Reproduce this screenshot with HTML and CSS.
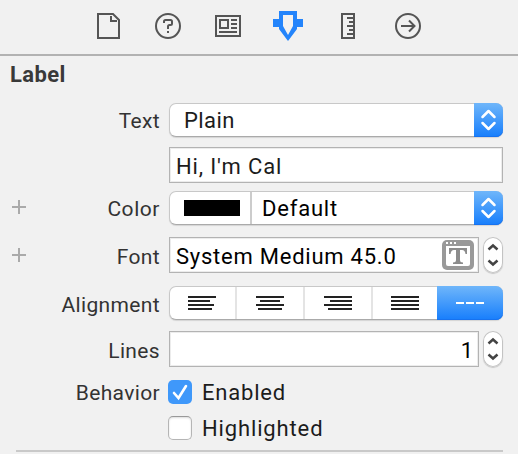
FILE: index.html
```html
<!DOCTYPE html>
<html lang="en">
<head>
<meta charset="utf-8">
<title>Attributes Inspector</title>
<link rel="stylesheet" href="styles.css">
</head>
<body>
<nav class="tabs">
  <svg class="tab" viewBox="0 0 30 30"><path d="M5 3H20L26 9V27H5Z"/><path d="M18 5V10H24"/></svg>
  <svg class="tab" viewBox="0 0 30 30"><circle cx="15" cy="15" r="12"/><path d="M11 12V10.5Q11 9 12.5 9H17.5Q19 9 19 10.5V12.5Q19 14 17.5 14H16.500Q15 14 15 15.500V18M15 20V22"/></svg>
  <svg class="tab" viewBox="0 0 30 30"><path d="M3 5H27V25H3ZM7 9H15V17H7ZM18 9H24M18 13H24M18 17H24M6 21H24"/></svg>
  <svg class="tab selected" viewBox="0 0 30 30"><path class="solid" fill-rule="evenodd" d="M6 0H24V8H30V16H24V18L15 30L6 18V16H0V8H6ZM10 4V15L15 24L20 15V4Z"/></svg>
  <svg class="tab" viewBox="0 0 30 30"><path d="M9 3H21V27H9ZM14 7H20M16 11H20M14 15H20M16 19H20M14 23H20"/></svg>
  <svg class="tab" viewBox="0 0 30 30"><circle cx="15" cy="15" r="12"/><path d="M8 15H21M16 9.500L21.500 15L16 20.500"/></svg>
</nav>
<main class="inspector">
  <h1 class="title">Label</h1>

  <div class="row r-text">
    <span></span><label class="name">Text</label>
    <div class="popup"><span class="value plain">Plain</span><span class="arrows"><svg viewBox="0 0 29 34"><path d="M8.500 14L14.500 8L20.500 14M8.500 20L14.500 26L20.500 20"/></svg></span></div>
  </div>
  <div class="row r-content">
    <span></span><span></span>
    <div class="field"><span class="hi">Hi, I'm Cal</span></div>
  </div>
  <div class="row r-color">
    <svg class="plus" viewBox="0 0 14 14"><path d="M0 7H14M7 0V14"/></svg><label class="name">Color</label>
    <div class="popup"><span class="well"><i class="swatch"></i></span><span class="value default">Default</span><span class="arrows"><svg viewBox="0 0 29 34"><path d="M8.500 14L14.500 8L20.500 14M8.500 20L14.500 26L20.500 20"/></svg></span></div>
  </div>
  <div class="row r-font">
    <svg class="plus" viewBox="0 0 14 14"><path d="M0 7H14M7 0V14"/></svg><label class="name">Font</label>
    <div class="pair">
      <div class="field"><span class="system">System Medium 45.0</span>
        <svg class="fonticon" viewBox="0 0 32 30"><rect width="32" height="30" rx="5" fill="#999"/><path d="M4 6H28V24Q28 26 26 26H6Q4 26 4 24Z" fill="#fff"/><path d="M4 2H6V4H4ZM8 2H10V4H8ZM12 2H14V4H12Z" fill="#fff"/><path d="M7 8H25V14H23.500Q23 10 20 10H18V20Q18 22.500 21 22.500V24H11V22.500Q14 22.500 14 20V10H12Q9 10 8.500 14H7Z" fill="#8c8c8c"/></svg>
      </div>
      <span class="stepper"><svg viewBox="0 0 20 36"><path d="M5.500 12.500L10 8.500L14.500 12.500M5.500 23.500L10 27.500L14.500 23.500"/></svg></span>
    </div>
  </div>
  <div class="row r-align">
    <span></span><label class="name">Alignment</label>
    <div class="segments">
      <span><svg viewBox="0 0 28 14"><path d="M0 1H28M0 5H22M0 9H26M0 13H24"/></svg></span>
      <span><svg viewBox="0 0 28 14"><path d="M0 1H28M4 5H24M0 9H28M2 13H26"/></svg></span>
      <span><svg viewBox="0 0 28 14"><path d="M0 1H28M6 5H28M0 9H28M4 13H28"/></svg></span>
      <span><svg viewBox="0 0 28 14"><path d="M0 1H28M0 5H28M0 9H28M0 13H28"/></svg></span>
      <span class="on"><svg viewBox="0 0 28 14"><path d="M0 7H8M10 7H18M20 7H28"/></svg></span>
    </div>
  </div>
  <div class="row r-lines">
    <span></span><label class="name">Lines</label>
    <div class="pair">
      <div class="field number"><span>1</span></div>
      <span class="stepper"><svg viewBox="0 0 20 36"><path d="M5.500 12.500L10 8.500L14.500 12.500M5.500 23.500L10 27.500L14.500 23.500"/></svg></span>
    </div>
  </div>
  <div class="row r-behavior">
    <span></span><label class="name">Behavior</label>
    <div class="check"><span class="box checked"><svg viewBox="0 0 24 24"><path d="M6 13L10.500 18L18 6"/></svg></span><span class="enabled">Enabled</span></div>
  </div>
  <div class="row r-highlight">
    <span></span><span></span>
    <div class="check"><span class="box"></span><span class="highlighted">Highlighted</span></div>
  </div>
  <hr class="rule">
</main>
</body>
</html>
```

FILE: styles.css
```css
* { box-sizing: border-box; }
body {
  margin: 0;
  height: 454px;
  overflow: hidden;
  background: #f1f1f1;
  color: #1c1c1c;
  font: 22px/30px Roboto, sans-serif;
}
svg { display: block; fill: none; }
.tabs {
  height: 56px;
  padding: 11px 95px 0 93px;
  display: flex;
  justify-content: space-between;
  border-bottom: 2px solid #b2b2b2;
}
.tab { width: 30px; height: 30px; stroke: #555; stroke-width: 2; }
.tab .solid { fill: #2384fb; stroke: none; }
.inspector { padding-right: 15px; }
.title {
  margin: 0;
  height: 47px;
  padding: 4px 0 0 10px;
  color: #393939;
  font-size: 22px;
  font-weight: 700;
  letter-spacing: .4px;
}
.row {
  display: grid;
  grid-template-columns: 60px 100px 334px;
  column-gap: 0;
  align-items: center;
  height: 34px;
  margin-bottom: 10px;
}
.row > :nth-child(3) { margin-left: 9px; margin-right: -9px; }
.r-content, .r-font, .r-lines { height: 36px; }
.r-content { margin-bottom: 8px; }
.r-color { margin-bottom: 12px; }
.r-font { margin-bottom: 13px; }
.r-align { margin-bottom: 11px; }
.r-lines { margin-bottom: 8px; }
.r-behavior { margin-bottom: 2px; }
.r-highlight { margin-bottom: 5px; }
.name { text-align: right; color: #333; font-size: 21px; letter-spacing: .35px; padding-top: 2px; white-space: nowrap; }
.r-color .name { letter-spacing: .55px; }
.r-font .name, .r-align .name, .r-lines .name { padding-top: 4px; }
.plus { width: 14px; height: 14px; margin: 0 0 0 12px; stroke: #aaa; stroke-width: 2; }
.r-color .plus { margin-top: -2px; }
.popup, .segments {
  display: flex;
  height: 34px;
  border: 1px solid #c8c8c8;
  border-bottom-color: #aaa;
  border-radius: 7px;
  background: #fff;
  box-shadow: 0 1px 1px rgba(0,0,0,.12);
}
.value { flex: 1; line-height: 34px; }
.plain { padding-left: 14px; letter-spacing: .4px; }
.hi { letter-spacing: .85px; }
.default { padding-left: 10px; color: #000; letter-spacing: .8px; }
.system { letter-spacing: .76px; white-space: nowrap; }
.enabled { letter-spacing: .8px; }
.highlighted { letter-spacing: .86px; }
.arrows, .segments .on {
  background: linear-gradient(#6fb6fa, #177efc);
  border-radius: 0 7px 7px 0;
  box-shadow: inset 0 -1px #1772ef;
  margin: -1px;
}
.arrows { width: 29px; margin-left: 0; }
.arrows svg { width: 29px; height: 34px; stroke: #fff; stroke-width: 2.5; stroke-linecap: round; stroke-linejoin: round; }
.well { width: 82px; border-right: 2px solid #ccc; padding: 8px 0 0 14px; }
.swatch { display: block; width: 56px; height: 16px; background: #000; }
.field {
  display: flex;
  align-items: center;
  height: 36px;
  padding: 3px 4px 0 6px;
  border: 1px solid #b3b3b3;
  box-shadow: inset 0 0 0 1px #ececec;
  background: #fff;
}
.pair { display: flex; gap: 4px; }
.pair .field { width: 310px; justify-content: space-between; color: #000; }
.pair .number { justify-content: flex-end; padding-right: 5px; }
.fonticon { width: 32px; height: 30px; margin-top: -3px; }
.stepper {
  width: 20px;
  height: 36px;
  border-radius: 10px;
  background: #fff;
  box-shadow: inset 0 0 0 1px #c3c3c3, 0 1px 1px rgba(0,0,0,.18);
}
.stepper svg { width: 20px; height: 36px; stroke: #444; stroke-width: 2.5; }
.segments > span { display: flex; align-items: center; justify-content: center; width: 68px; border-right: 2px solid #e4e4e4; }
.segments > span:first-child { width: 67px; padding-right: 1px; }
.segments > span:nth-child(4) { width: 65px; border: 0; padding-right: 1px; }
.segments > .on { width: 66px; border: 0; }
.segments svg { width: 28px; height: 14px; stroke: #222; stroke-width: 2; flex: none; }
.segments .on svg { stroke: #fff; }
.check { display: flex; align-items: center; }
.row > .check { margin-left: 8px; }
.check > span:last-child { margin-left: 10px; padding-top: 1px; }
.box { width: 24px; height: 24px; border: 1px solid #b5b5b5; border-top-color: #999; border-radius: 5px; background: #fff; box-shadow: inset 0 1px 2px #ddd; }
.checked { border: 0; background: #3f98fa; box-shadow: none; }
.checked svg { width: 24px; height: 24px; stroke: #fff; stroke-width: 2.6; stroke-linecap: round; }
.rule { margin: 0 0 0 16px; border: 0; height: 2px; background: #c9c9c9; }
```
